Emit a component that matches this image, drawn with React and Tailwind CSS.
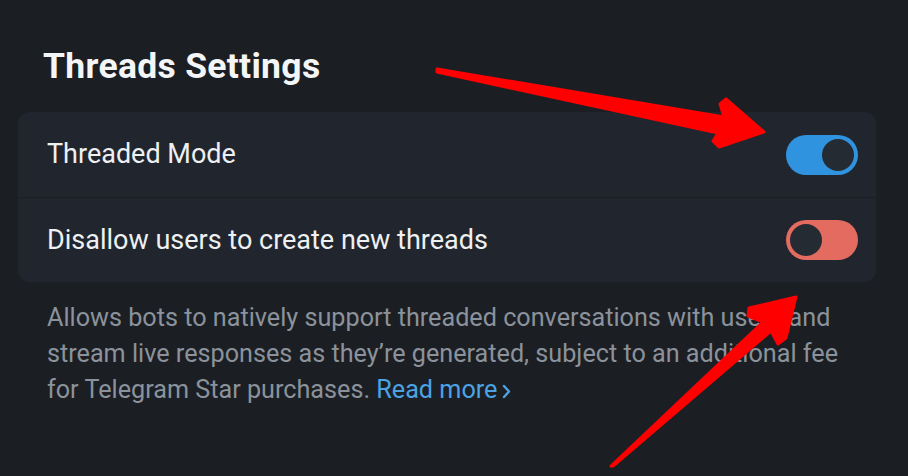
export default function App() {
  return (
    <div
      className="relative w-[908px] h-[476px] overflow-hidden bg-[#1b1f24] pl-[18px] pr-[32px]"
      style={{ fontFamily: 'Roboto, "Open Sans", sans-serif' }}
    >
      <h1 className="pl-[25px] pt-[46px] text-[35.5px] leading-[40px] font-bold text-[#f4f5f6] tracking-[0.3px]">
        Threads Settings
      </h1>
      <div className="mt-[26px] rounded-[12px] bg-[#21262e] overflow-hidden">
        <div className="flex items-center justify-between h-[85px] pl-[29px] pr-[18px]">
          <span className="text-[27px] text-[#eef0f2]">Threaded Mode</span>
          <div className="flex items-center justify-end w-[72px] h-[40px] rounded-full bg-[#3093e0] p-[4px]">
            <div className="w-[32px] h-[32px] rounded-full bg-[#252b33]" />
          </div>
        </div>
        <div className="h-px bg-[#1b1f24]" />
        <div className="flex items-center justify-between h-[84px] pl-[29px] pr-[18px]">
          <span className="text-[27px] text-[#eef0f2]">Disallow users to create new threads</span>
          <div className="flex items-center justify-start w-[72px] h-[40px] rounded-full bg-[#e46b5f] p-[4px]">
            <div className="w-[32px] h-[32px] rounded-full bg-[#252b33]" />
          </div>
        </div>
      </div>
      <p className="pl-[29px] mt-[18px] text-[25.2px] leading-[36px] text-[#8b929b] whitespace-nowrap">
        Allows bots to natively support threaded conversations with users and
        <br />
        stream live responses as they’re generated, subject to an additional fee
        <br />
        for Telegram Star purchases.{" "}
        <span className="inline-flex items-center gap-[5px] text-[#4ba3e3]">
          Read more
          <svg width="9" height="15" viewBox="0 0 9 15" className="mt-[3px]">
            <path d="M2 2 L7 7.5 L2 13" fill="none" stroke="#4ba3e3" strokeWidth="2.4" strokeLinecap="round" strokeLinejoin="round" />
          </svg>
        </span>
      </p>
      <svg
        className="absolute left-0 top-0 pointer-events-none"
        width="908"
        height="476"
        viewBox="0 0 908 476"
      >
        <polygon
          points="437,69 724,117 720,104 726,99 764,132 719,147 713,141 718,133 437,72"
          fill="#ff0000"
          stroke="#ff0000"
          strokeWidth="3"
          strokeLinejoin="round"
        />
        <polygon
          points="611,466 763,322 748,316 749,308 796,297 786,338 778,344 771,331 613,466"
          fill="#ff0000"
          stroke="#ff0000"
          strokeWidth="3"
          strokeLinejoin="round"
        />
      </svg>
    </div>
  );
}
